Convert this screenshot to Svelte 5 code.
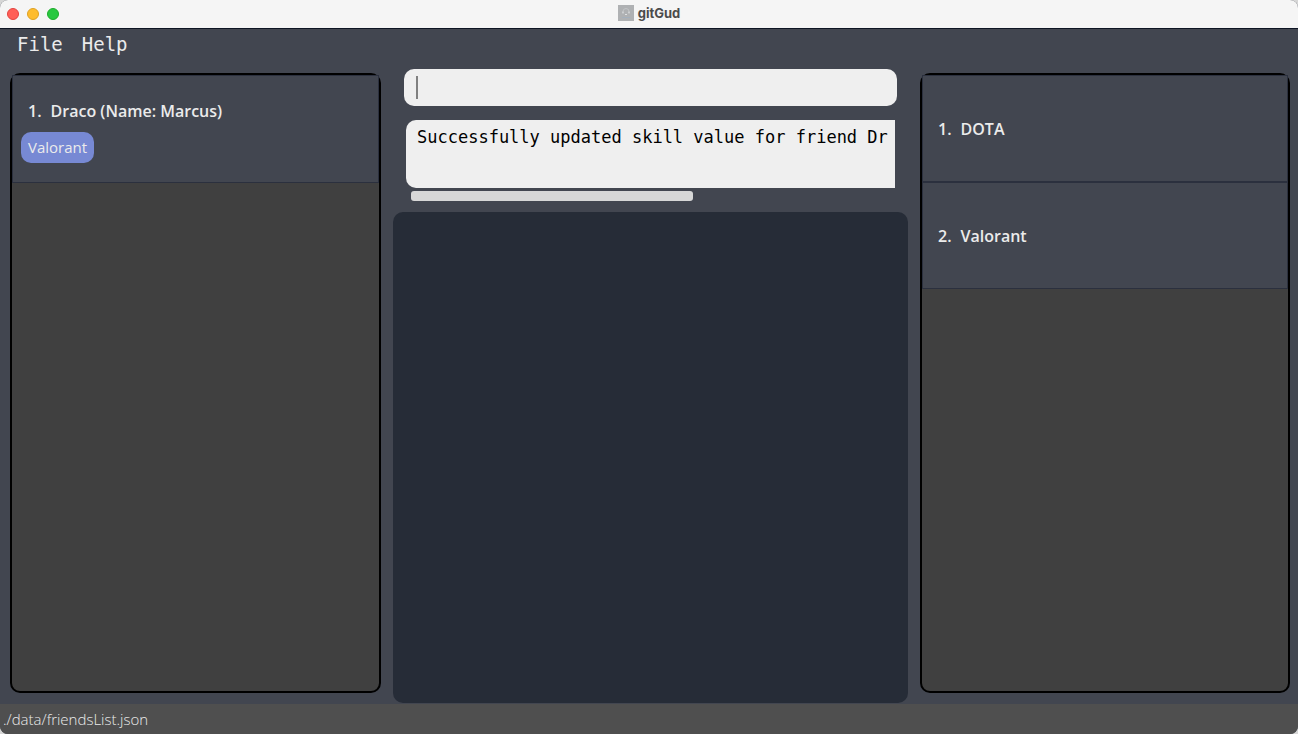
<script>
  const menus = ['File', 'Help'];
  const friends = [{ name: 'Draco (Name: Marcus)', games: ['Valorant'] }];
  const games = ['DOTA', 'Valorant'];
  const result = 'Successfully updated skill value for friend Dr';
  let command = $state('');
</script>

<div class="window">
  <header class="titlebar">
    <div class="lights">
      <button class="light close" aria-label="Close"></button>
      <button class="light minimise" aria-label="Minimise"></button>
      <button class="light zoom" aria-label="Zoom"></button>
    </div>
    <h1>
      <svg width="16" height="16" viewBox="0 0 16 16" aria-hidden="true">
        <rect width="16" height="16" fill="#afb1b3" />
        <path d="M5 8V6.5a3 3 0 0 1 6 0V8" fill="none" stroke="#c3c5c7" stroke-width="1" />
        <path d="M5 6.5v2M11 6.5v2M7 9.5h2" fill="none" stroke="#e0e2e4" stroke-width="1" />
        <path d="M4 12.5h8" stroke="#a4b0bd" stroke-width="1" />
      </svg>
      gitGud
    </h1>
  </header>

  <nav class="menubar">
    {#each menus as menu}
      <button>{menu}</button>
    {/each}
  </nav>

  <main>
    <section class="panel" aria-label="Friends">
      <ol>
        {#each friends as friend, i}
          <li class="friend">
            <div class="title"><span>{i + 1}.</span><span>{friend.name}</span></div>
            <div class="tags">
              {#each friend.games as game}
                <span class="tag">{game}</span>
              {/each}
            </div>
          </li>
        {/each}
      </ol>
    </section>

    <section class="center" aria-label="Console">
      <div class="command">
        <input type="text" aria-label="Command" bind:value={command} />
        {#if command === ''}<span class="caret"></span>{/if}
      </div>
      <output class="result">{result}</output>
      <div class="track"><div class="thumb"></div></div>
      <div class="details"></div>
    </section>

    <section class="panel" aria-label="Games">
      <ol>
        {#each games as game, i}
          <li>
            <div class="title"><span>{i + 1}.</span><span>{game}</span></div>
          </li>
        {/each}
      </ol>
    </section>
  </main>

  <footer>./data/friendsList.json</footer>
</div>

<style>
  :global(body) {
    margin: 0;
    background: #d6d6d6;
  }

  .window {
    display: flex;
    flex-direction: column;
    min-height: 100vh;
    box-sizing: border-box;
    overflow: hidden;
    border-radius: 8px;
    background: #424650;
    color: #ebebeb;
    font-family: 'Open Sans', sans-serif;
  }

  button {
    padding: 0;
    border: 0;
    background: none;
    color: inherit;
  }

  .titlebar {
    display: grid;
    grid-template-columns: 1fr auto 1fr;
    align-items: center;
    height: 29px;
    box-sizing: border-box;
    border-bottom: 1px solid #0e1524;
    background: #f5f5f5;
  }

  .lights {
    display: flex;
    gap: 8px;
    padding-left: 7px;
  }

  .light {
    width: 12px;
    height: 12px;
    border: 1px solid #e2443f;
    border-radius: 50%;
    background: #ff5f57;
  }

  .minimise {
    border-color: #dea123;
    background: #febc2e;
  }

  .zoom {
    border-color: #1dac2b;
    background: #28c840;
  }

  h1 {
    display: flex;
    align-items: center;
    gap: 4px;
    margin: 0;
    padding-bottom: 2px;
    color: #4b4b4b;
    font: 700 13px/16px Inter, sans-serif;
  }

  .menubar {
    display: flex;
    align-items: flex-start;
    gap: 19px;
    height: 34px;
    padding: 0 17px;
  }

  .menubar button {
    font: 19px/30px 'DejaVu Sans Mono', monospace;
  }

  main {
    display: grid;
    grid-template-columns: 371fr 515fr 370fr;
    gap: 12px;
    flex: 1;
    padding: 0 8px 0 10px;
  }

  .panel {
    margin: 10px 0 11px;
    border: 2px solid #000;
    border-radius: 10px;
    background: #404040;
  }

  ol {
    margin: 0;
    padding: 0;
    list-style: none;
  }

  li {
    display: flex;
    flex-direction: column;
    justify-content: center;
    box-sizing: border-box;
    min-height: 107px;
    padding: 8px;
    border: 1px solid #2b303e;
    background: #424650;
  }

  .friend {
    min-height: 108px;
    padding-top: 13px;
    gap: 10px;
  }

  .title {
    display: flex;
    gap: 9px;
    padding-left: 7px;
    font-size: 16px;
    font-weight: 600;
    line-height: 22px;
  }

  .tags {
    display: flex;
    gap: 6px;
  }

  .tag {
    padding: 4px 7px;
    border-radius: 10px;
    background: #7789d4;
    font-size: 15px;
    line-height: 23px;
  }

  .center {
    display: flex;
    flex-direction: column;
    min-width: 0;
    padding-top: 6px;
  }

  .command {
    position: relative;
    margin: 0 11px;
  }

  input {
    display: block;
    width: 100%;
    height: 37px;
    box-sizing: border-box;
    padding: 0 12px;
    border: 0;
    border-radius: 10px;
    outline: 0;
    background: #efefef;
    color: #000;
    font: 17px 'DejaVu Sans Mono', monospace;
  }

  .caret {
    position: absolute;
    top: 7px;
    left: 12px;
    width: 2px;
    height: 23px;
    background: #808080;
  }

  .result {
    display: block;
    height: 68px;
    box-sizing: border-box;
    margin: 14px 13px 0;
    padding: 6px 0 0 11px;
    overflow: hidden;
    border-radius: 10px 0 0 10px;
    background: #efefef;
    color: #000;
    font: 17px/22px 'DejaVu Sans Mono', monospace;
    white-space: nowrap;
  }

  .track {
    margin: 3px 10px 11px 18px;
  }

  .thumb {
    width: 58%;
    height: 10px;
    border-radius: 3px;
    background: #d7d7d7;
  }

  .details {
    flex: 1;
    margin-bottom: 1px;
    border-radius: 10px;
    background: #262c37;
  }

  footer {
    padding: 5px 3px 4px;
    background: #4f4f4f;
    font-size: 15px;
    font-weight: 300;
    line-height: 21px;
  }
</style>
